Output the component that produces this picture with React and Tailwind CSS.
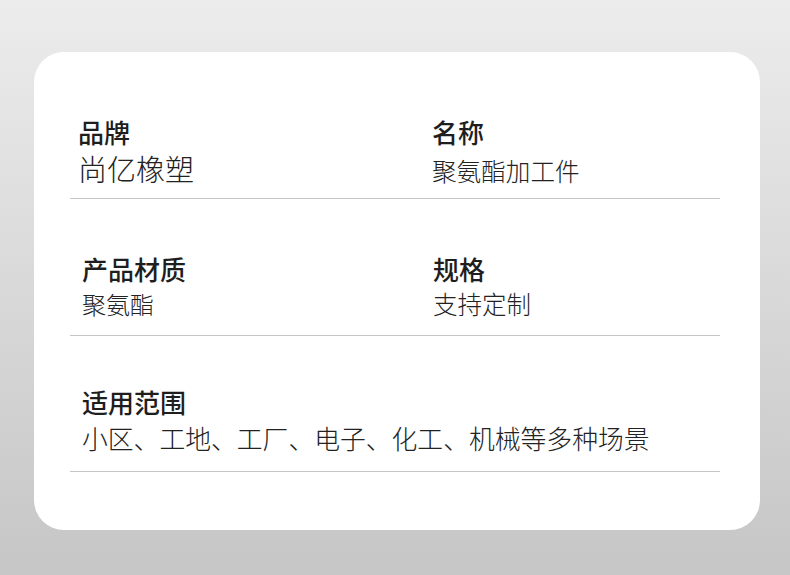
const font = { fontFamily: '"Noto Sans CJK SC", "Noto Sans", sans-serif' };

const Field = ({ label, value, valueClass, offset }) => (
  <div className={offset}>
    <div className="text-[26px] leading-[26px] font-medium text-[#1e1e1e]">{label}</div>
    <div className={`font-light text-[#222] ${valueClass}`}>{value}</div>
  </div>
);

export default function App() {
  return (
    <div
      className="w-[790px] h-[575px] bg-gradient-to-b from-[#ececec] to-[#c6c6c6] pt-[52px] pl-[34px]"
      style={font}
    >
      <div className="w-[726px] h-[478px] bg-white rounded-[30px] pt-[67px] pl-[36px] pr-[40px]">
        {/* 品牌 / 名称 */}
        <div className="grid grid-cols-[354px_1fr]">
          <Field
            label="品牌"
            value="尚亿橡塑"
            offset="pl-[8px]"
            valueClass="text-[29px] leading-[29px] mt-[9px]"
          />
          <Field
            label="名称"
            value="聚氨酯加工件"
            offset="pl-[8px]"
            valueClass="text-[24.6px] leading-[24px] mt-[13px]"
          />
        </div>
        <div className="h-px bg-[#c4c4c4] mt-[15px]" />

        {/* 产品材质 / 规格 */}
        <div className="grid grid-cols-[354px_1fr] mt-[57px]">
          <Field
            label="产品材质"
            value="聚氨酯"
            offset="pl-[12px]"
            valueClass="text-[24px] leading-[24px] mt-[10px]"
          />
          <Field
            label="规格"
            value="支持定制"
            offset="pl-[9px]"
            valueClass="text-[24.5px] leading-[24px] mt-[10px]"
          />
        </div>
        <div className="h-px bg-[#c4c4c4] mt-[19px]" />

        {/* 适用范围 */}
        <div className="mt-[53px]">
          <Field
            label="适用范围"
            value="小区、工地、工厂、电子、化工、机械等多种场景"
            offset="pl-[12px]"
            valueClass="text-[25.8px] leading-[26px] mt-[10px]"
          />
        </div>
        <div className="h-px bg-[#c4c4c4] mt-[20px]" />
      </div>
    </div>
  );
}
